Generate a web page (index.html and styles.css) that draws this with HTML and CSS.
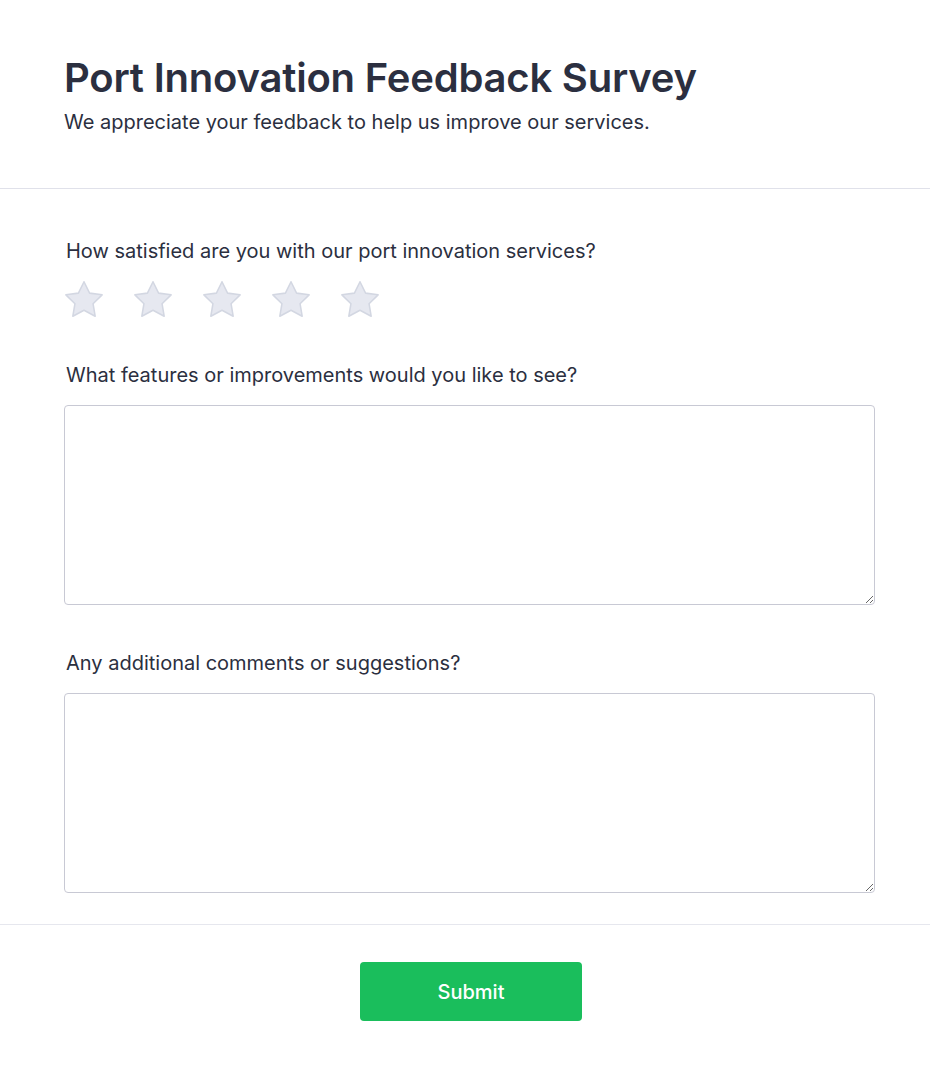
FILE: index.html
```html
<!DOCTYPE html>
<html lang="en">
<head>
<meta charset="utf-8">
<title>Port Innovation Feedback Survey</title>
<link rel="stylesheet" href="styles.css">
</head>
<body>
<div class="survey">
  <header class="header">
    <h1 class="title">Port Innovation Feedback Survey</h1>
    <p class="subtitle">We appreciate your feedback to help us improve our services.</p>
  </header>
  <form class="form">
    <div class="field">
      <label class="label">How satisfied are you with our port innovation services?</label>
      <div class="stars">
        <svg class="star" viewBox="2.2 2.2 19.6 18.7"><path d="M12 2.6l2.9 5.9 6.5.9-4.7 4.6 1.1 6.5L12 17.4l-5.8 3.1 1.1-6.5-4.7-4.6 6.5-.9z"/></svg>
        <svg class="star" viewBox="2.2 2.2 19.6 18.7"><path d="M12 2.6l2.9 5.9 6.5.9-4.7 4.6 1.1 6.5L12 17.4l-5.8 3.1 1.1-6.5-4.7-4.6 6.5-.9z"/></svg>
        <svg class="star" viewBox="2.2 2.2 19.6 18.7"><path d="M12 2.6l2.9 5.9 6.5.9-4.7 4.6 1.1 6.5L12 17.4l-5.8 3.1 1.1-6.5-4.7-4.6 6.5-.9z"/></svg>
        <svg class="star" viewBox="2.2 2.2 19.6 18.7"><path d="M12 2.6l2.9 5.9 6.5.9-4.7 4.6 1.1 6.5L12 17.4l-5.8 3.1 1.1-6.5-4.7-4.6 6.5-.9z"/></svg>
        <svg class="star" viewBox="2.2 2.2 19.6 18.7"><path d="M12 2.6l2.9 5.9 6.5.9-4.7 4.6 1.1 6.5L12 17.4l-5.8 3.1 1.1-6.5-4.7-4.6 6.5-.9z"/></svg>
      </div>
    </div>
    <div class="field">
      <label class="label" for="features">What features or improvements would you like to see?</label>
      <textarea id="features" class="textarea"></textarea>
    </div>
    <div class="field field-last">
      <label class="label" for="comments">Any additional comments or suggestions?</label>
      <textarea id="comments" class="textarea"></textarea>
    </div>
  </form>
  <footer class="footer">
    <button type="button" class="submit">Submit</button>
  </footer>
</div>
</body>
</html>
```
FILE: styles.css
```css
* { box-sizing: border-box; }
html, body { margin: 0; padding: 0; background: #ffffff; }
body { font-family: Inter, "Noto Sans", sans-serif; color: #2b2f40; }

.header {
  padding: 52px 55px 52px 64px;
  border-bottom: 1px solid #e0e1ea;
}
.title {
  margin: 0;
  font-size: 40px;
  font-weight: 600;
  line-height: 52px;
  letter-spacing: -0.2px;
}
.subtitle {
  margin: 4px 0 0;
  font-size: 20px;
  font-weight: 400;
  line-height: 28px;
}

.form {
  padding: 49px 55px 31px 64px;
  border-bottom: 1px solid #e6e7ee;
  display: flex;
  flex-direction: column;
  gap: 45px;
}
.field { display: flex; flex-direction: column; }
.label {
  font-size: 20px;
  font-weight: 400;
  line-height: 26px;
  padding-left: 2px;
  margin-bottom: 17px;
}
.stars { display: flex; gap: 31px; margin-bottom: 0; padding-left: 1px; }
.star { width: 38px; height: 36px; display: block; }
.star path {
  fill: #e6e8f0;
  stroke: #d3d7e2;
  stroke-width: 0.8;
  stroke-linejoin: round;
}
.textarea {
  display: block;
  width: 100%;
  height: 200px;
  border: 1px solid #c8c9d4;
  border-radius: 4px;
  resize: vertical;
  font: inherit;
}

.footer {
  display: flex;
  justify-content: center;
  padding: 37px 0 50px;
}
.submit {
  width: 222px;
  height: 59px;
  border: none;
  border-radius: 4px;
  background: #1abe5c;
  color: #ffffff;
  font-family: Inter, "Noto Sans", sans-serif;
  font-size: 20px;
  font-weight: 500;
  margin-left: 12px;
}
```
